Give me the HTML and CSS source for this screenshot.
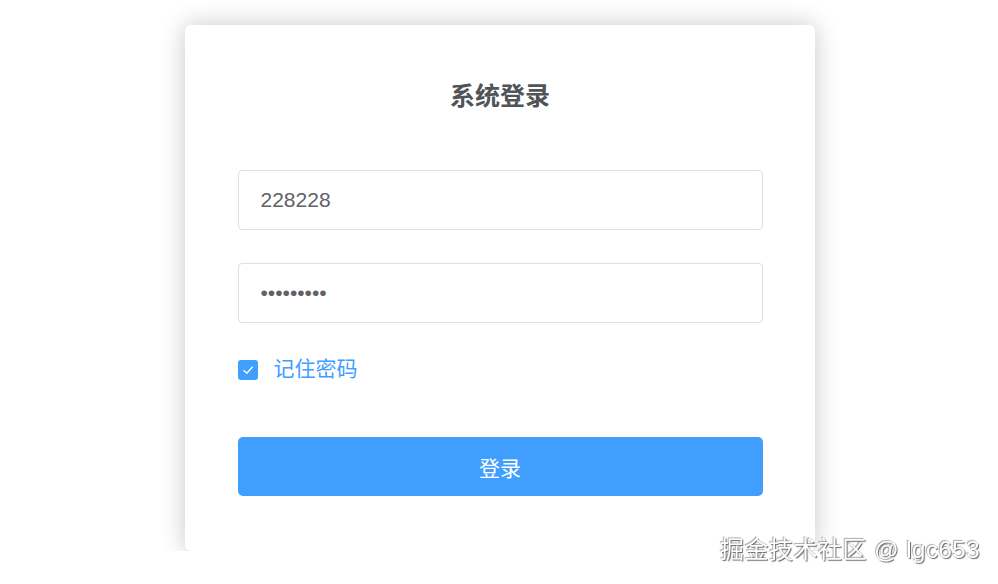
FILE: index.html
```html
<!DOCTYPE html>
<html lang="zh-CN">
<head>
  <meta charset="UTF-8">
  <meta name="viewport" content="width=device-width, initial-scale=1.0">
  <title>系统登录</title>
  <link rel="stylesheet" href="styles.css">
</head>
<body>
  <form class="login-container">
    <h3 class="title">系统登录</h3>
    <div class="form-item">
      <input class="text-input" type="text" value="228228">
    </div>
    <div class="form-item">
      <input class="text-input" type="password" value="123456789">
    </div>
    <label class="remember">
      <span class="check-box">
        <svg class="check-mark" width="20" height="20" viewBox="0 0 20 20">
          <path d="M5.5 10.2 L8.8 13.3 L14.6 6.8" fill="none" stroke="#fff" stroke-width="1.3"/>
        </svg>
      </span>
      <span class="check-label">记住密码</span>
    </label>
    <button class="login-btn" type="button">登录</button>
  </form>

  <div class="watermark">掘金技术社区 @ lgc653</div>
</body>
</html>
```

FILE: styles.css
```css
body {
  margin: 0;
  padding-left: 1px;
  background-color: #fff;
  font-family: "Liberation Sans", Arial, "Noto Sans CJK SC", sans-serif;
}

.login-container {
  box-sizing: border-box;
  width: 630px;
  margin: 25px auto 0 auto;
  padding: 55px 52px 55px 53px;
  background: #fff;
  border-radius: 6px;
  box-shadow: 0 0 25px #cac6c6;
}

.title {
  margin: 0 0 58px 0;
  text-align: center;
  color: #505458;
  font-size: 25px;
  line-height: 32px;
  font-weight: bold;
}

.form-item {
  margin-bottom: 33px;
}

.form-item:last-of-type {
  margin-bottom: 0;
}

.text-input {
  box-sizing: border-box;
  display: block;
  width: 100%;
  height: 60px;
  padding: 0 22px;
  border: 1px solid #dcdfe6;
  border-radius: 4px;
  font-family: inherit;
  font-size: 21px;
  color: #606266;
  outline: none;
}

.remember {
  display: flex;
  align-items: center;
  margin-top: 37px;
  height: 20px;
}

.check-box {
  display: block;
  width: 20px;
  height: 20px;
  border-radius: 3px;
  background-color: #409eff;
}

.check-mark {
  display: block;
}

.check-label {
  margin-left: 16px;
  margin-top: -3px;
  font-size: 21px;
  line-height: 20px;
  color: #409eff;
}

.login-btn {
  display: block;
  width: 100%;
  height: 59px;
  margin-top: 57px;
  border: none;
  border-radius: 5px;
  background-color: #409eff;
  color: #fff;
  font-family: inherit;
  font-size: 21px;
  cursor: pointer;
}

.watermark {
  position: fixed;
  right: 18px;
  bottom: 19px;
  font-size: 24px;
  color: #fff;
  text-shadow: 1px 1px 1px #666, -1px -1px 1px #aaa;
  letter-spacing: 0.5px;
}
```
